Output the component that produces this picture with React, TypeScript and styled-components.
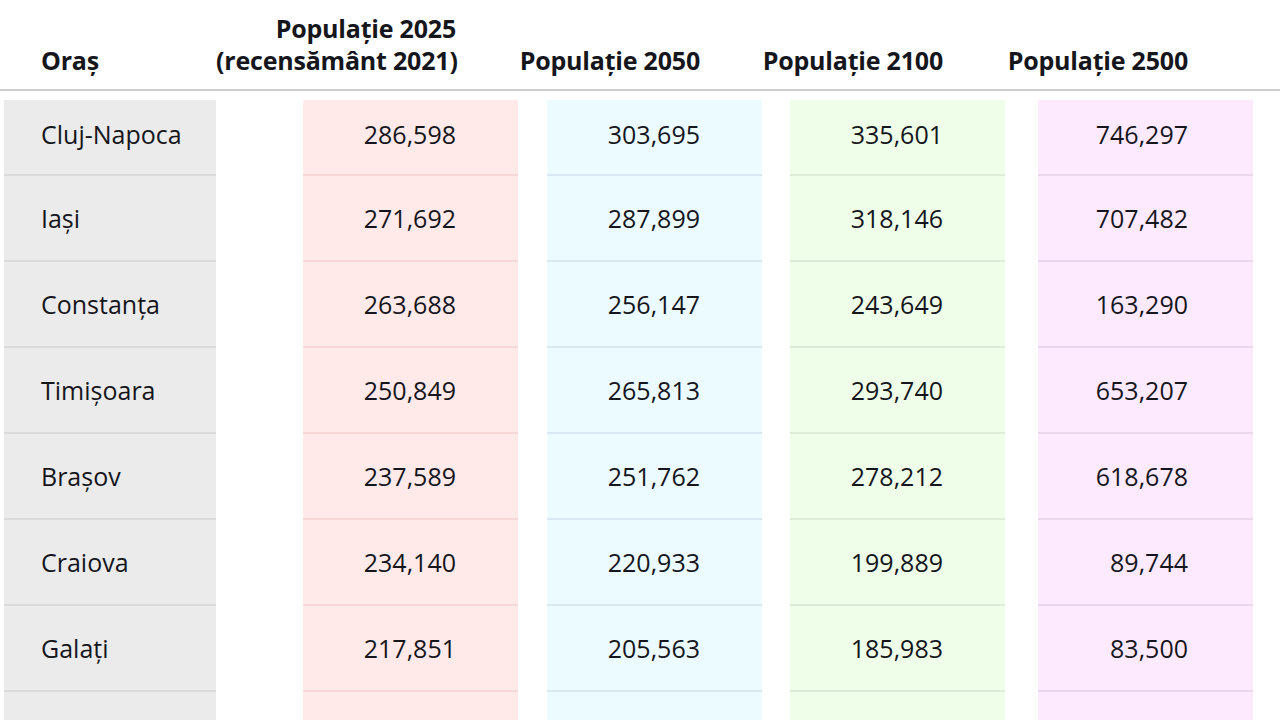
import React from "react";
import styled, { createGlobalStyle } from "styled-components";

const GlobalStyle = createGlobalStyle`
  html, body {
    margin: 0;
    padding: 0;
    background: #ffffff;
  }
  body {
    width: 1280px;
    height: 720px;
    overflow: hidden;
    font-family: "Open Sans", "Noto Sans", "Liberation Sans", sans-serif;
    color: #15161c;
  }
`;

type Tone = "grey" | "red" | "cyan" | "green" | "violet";

const tones: Record<Tone, { bg: string; line: string }> = {
  grey: { bg: "#ebebeb", line: "#dadada" },
  red: { bg: "#ffe9e9", line: "#f6d8d8" },
  cyan: { bg: "#ebfbff", line: "#d9e8f2" },
  green: { bg: "#effee9", line: "#dcecd8" },
  violet: { bg: "#fdeafe", line: "#ecd8ee" },
};

const Table = styled.div`
  width: 1280px;
`;

const columns = "212px 302px 244px 243px 248px";

const HeaderRow = styled.div`
  display: grid;
  grid-template-columns: ${columns};
  align-items: end;
  height: 91px;
  padding-left: 4px;
  box-sizing: border-box;
  border-bottom: 2px solid #cdcdcd;
`;

const HeaderCell = styled.div<{ $first?: boolean; $last?: boolean }>`
  font-size: 25px;
  font-weight: 700;
  line-height: 32px;
  letter-spacing: -0.2px;
  padding-bottom: 13px;
  text-align: ${(p) => (p.$first ? "left" : "right")};
  padding-left: ${(p) => (p.$first ? "37px" : "0")};
  padding-right: ${(p) => (p.$first ? "0" : p.$last ? "65px" : "62px")};
  white-space: nowrap;
`;

const Body = styled.div`
  padding-top: 9px;
`;

const Row = styled.div`
  display: grid;
  grid-template-columns: ${columns};
  padding-left: 4px;
`;

const Cell = styled.div<{
  $tone: Tone;
  $first?: boolean;
  $name?: boolean;
  $last?: boolean;
}>`
  box-sizing: border-box;
  width: ${(p) => (p.$name ? "212px" : "215px")};
  justify-self: end;
  height: ${(p) => (p.$first ? "76px" : "86px")};
  padding-bottom: ${(p) => (p.$first ? "6px" : "0")};
  display: flex;
  align-items: center;
  justify-content: ${(p) => (p.$name ? "flex-start" : "flex-end")};
  padding-left: ${(p) => (p.$name ? "37px" : "0")};
  padding-right: ${(p) => (p.$name ? "0" : p.$last ? "65px" : "62px")};
  background: ${(p) => tones[p.$tone].bg};
  border-bottom: 2px solid ${(p) => tones[p.$tone].line};
  font-size: 25px;
  font-weight: 500;
  white-space: nowrap;
`;

const data: string[][] = [
  ["Cluj-Napoca", "286,598", "303,695", "335,601", "746,297"],
  ["Iași", "271,692", "287,899", "318,146", "707,482"],
  ["Constanța", "263,688", "256,147", "243,649", "163,290"],
  ["Timișoara", "250,849", "265,813", "293,740", "653,207"],
  ["Brașov", "237,589", "251,762", "278,212", "618,678"],
  ["Craiova", "234,140", "220,933", "199,889", "89,744"],
  ["Galați", "217,851", "205,563", "185,983", "83,500"],
  // next row only shows its top edge inside the frame
  ["", "", "", "", ""],
];

const valueTones: Tone[] = ["red", "cyan", "green", "violet"];

const App = () => {
  return (
    <>
      <GlobalStyle />
      <Table>
        <HeaderRow>
          <HeaderCell $first>Oraș</HeaderCell>
          <HeaderCell>
            Populație 2025
            <br />
            (recensământ 2021)
          </HeaderCell>
          <HeaderCell>Populație 2050</HeaderCell>
          <HeaderCell>Populație 2100</HeaderCell>
          <HeaderCell $last>Populație 2500</HeaderCell>
        </HeaderRow>
        <Body>
          {data.map(([city, ...values], index) => (
            <Row key={index}>
              <Cell $tone="grey" $name $first={index === 0}>
                {city}
              </Cell>
              {values.map((value, i) => (
                <Cell
                  key={i}
                  $tone={valueTones[i]}
                  $first={index === 0}
                  $last={i === values.length - 1}
                >
                  {value}
                </Cell>
              ))}
            </Row>
          ))}
        </Body>
      </Table>
    </>
  );
};

export default App;
